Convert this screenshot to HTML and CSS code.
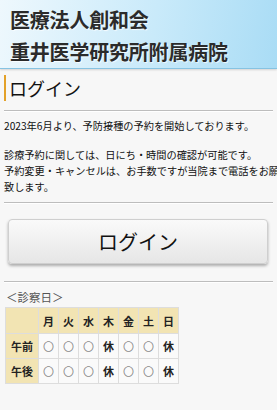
FILE: index.html
```html
<!DOCTYPE html>
<html lang="ja">

<head>
    <meta charset="UTF-8">
    <meta name="viewport" content="width=device-width, initial-scale=1.0">
    <title>ログイン</title>
    <link rel="stylesheet" href="styles.css">
</head>

<body>
    <header class="site-header">
        <h1>医療法人創和会<br>重井医学研究所附属病院</h1>
    </header>

    <div class="content">
        <h2 class="page-title">ログイン</h2>
        <hr class="line">

        <div class="notice">
            <p>2023年6月より、予防接種の予約を開始しております。</p>
            <p>
                診療予約に関しては、日にち・時間の確認が可能です。<br>
                予約変更・キャンセルは、お手数ですが当院まで電話をお願い<br>
                致します。
            </p>
        </div>
        <hr class="line line-notice">

        <div class="button-area">
            <button class="login-button">ログイン</button>
        </div>
        <hr class="line line-button">

        <p class="schedule-label">＜診察日＞</p>
        <table class="schedule">
            <tr>
                <th></th>
                <th>月</th>
                <th>火</th>
                <th>水</th>
                <th>木</th>
                <th>金</th>
                <th>土</th>
                <th>日</th>
            </tr>
            <tr>
                <th>午前</th>
                <td class="open">〇</td>
                <td class="open">〇</td>
                <td class="open">〇</td>
                <td>休</td>
                <td class="open">〇</td>
                <td class="open">〇</td>
                <td>休</td>
            </tr>
            <tr>
                <th>午後</th>
                <td class="open">〇</td>
                <td class="open">〇</td>
                <td class="open">〇</td>
                <td>休</td>
                <td class="open">〇</td>
                <td class="open">〇</td>
                <td>休</td>
            </tr>
        </table>
    </div>
</body>

</html>
```

FILE: styles.css
```css
/* Reset */
* {
    margin: 0;
    padding: 0;
    box-sizing: border-box;
}

html,
body {
    overflow-x: hidden;
}

body {
    font-family: "Noto Sans CJK JP", "Noto Sans", sans-serif;
    background-color: #f7f7f7;
    color: #222;
}

/* Header */
.site-header {
    height: 69px;
    padding: 4px 10px 0;
    background: linear-gradient(100deg, #eef8fd 0%, #c9eafa 55%, #a9dcf5 100%);
    border-bottom: 1px solid #86c3e2;
    box-shadow: 0 1px 2px rgba(0, 0, 0, 0.15);
}

.site-header h1 {
    font-size: 20px;
    font-weight: 700;
    line-height: 32px;
    color: #2b2b2b;
    text-shadow: 1px 1px 1px rgba(255, 255, 255, 0.8);
    letter-spacing: -0.2px;
}

/* Content */
.content {
    padding: 6px 4px 0;
}

.page-title {
    font-size: 18px;
    font-weight: 400;
    line-height: 26px;
    padding-left: 3px;
    border-left: 2px solid #e3a129;
    color: #111;
}

.line {
    border: none;
    border-top: 1px solid #bdbdbd;
    border-bottom: 1px solid #fff;
    margin: 9px 0 6px;
}

.line-notice {
    margin: 7px 0 15px;
}

.line-button {
    margin: 17px 0 6px;
}

.notice {
    font-size: 10.2px;
    line-height: 16px;
    white-space: nowrap;
    color: #111;
}

.notice p + p {
    margin-top: 13px;
}

.button-area {
    padding: 0 5px 0 4px;
}

.login-button {
    display: block;
    width: 100%;
    height: 45px;
    font-family: inherit;
    font-size: 20px;
    color: #111;
    background: linear-gradient(#fafafa, #e6e6e6);
    border: 1px solid #cfcfcf;
    border-radius: 4px;
    box-shadow: 0 2px 3px rgba(0, 0, 0, 0.3);
    cursor: pointer;
}

.schedule-label {
    font-size: 11.5px;
    line-height: 16px;
    padding-left: 2px;
    margin-bottom: 2px;
    color: #555;
}

/* Schedule table */
.schedule {
    border-collapse: collapse;
    margin-left: 1px;
    font-size: 11px;
}

.schedule th,
.schedule td {
    border: 1px solid #ddd;
    height: 25px;
    width: 20px;
    text-align: center;
    font-weight: 700;
    color: #222;
}

.schedule th {
    background-color: #f2e4b3;
}

.schedule tr:first-child th {
    height: 26px;
}

.schedule tr th:first-child {
    width: 33px;
}

.schedule td {
    background-color: #fafafa;
}

.schedule td.open {
    font-weight: 400;
    color: #888;
}
```
